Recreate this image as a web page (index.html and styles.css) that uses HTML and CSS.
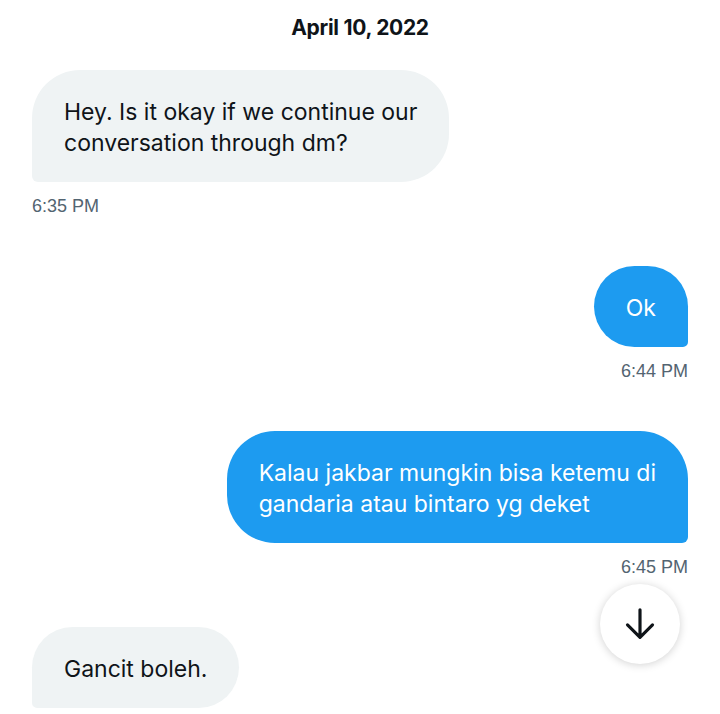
FILE: index.html
```html
<!DOCTYPE html>
<html lang="en">
<head>
    <meta charset="UTF-8">
    <meta name="viewport" content="width=device-width, initial-scale=1.0">
    <title>Messages</title>
    <link rel="stylesheet" href="styles.css">
</head>
<body>
    <div class="chat">
        <div class="date">April 10, 2022</div>

        <div class="message received">
            <div class="bubble">Hey. Is it okay if we continue our<br>conversation through dm?</div>
            <div class="time">6:35 PM</div>
        </div>

        <div class="message sent">
            <div class="bubble">Ok</div>
            <div class="time">6:44 PM</div>
        </div>

        <div class="message sent">
            <div class="bubble">Kalau jakbar mungkin bisa ketemu di<br>gandaria atau bintaro yg deket</div>
            <div class="time">6:45 PM</div>
        </div>

        <div class="message received last">
            <div class="bubble">Gancit boleh.</div>
        </div>
    </div>

    <button class="scroll-down" aria-label="Scroll to bottom">
        <svg width="40" height="40" viewBox="0 0 24 24">
            <path d="M12 3.5v16M4.5 12.5l7.5 7.5 7.5-7.5" fill="none" stroke="#0f1419" stroke-width="1.9" stroke-linecap="round" stroke-linejoin="round"/>
        </svg>
    </button>
</body>
</html>
```

FILE: styles.css
```css
body {
    margin: 0;
    background-color: #ffffff;
    font-family: Inter, "Noto Sans", sans-serif;
    color: #0f1419;
    overflow: hidden;
}
.chat {
    display: flex;
    flex-direction: column;
    padding: 14px 32px 0;
}
.date {
    text-align: center;
    font-size: 21px;
    font-weight: 700;
    line-height: 28px;
    letter-spacing: -0.3px;
    margin-bottom: 28px;
}
.message {
    display: flex;
    flex-direction: column;
    margin-bottom: 50px;
}
.message.last {
    margin-bottom: 0;
}
.message.sent {
    align-items: flex-end;
}
.message.received {
    align-items: flex-start;
}
.bubble {
    font-size: 23px;
    line-height: 31px;
    padding: 27px 32px 23px;
    border-radius: 48px;
}
.received .bubble {
    background-color: #eff3f4;
    border-bottom-left-radius: 6px;
}
.sent .bubble {
    background-color: #1d9bf0;
    color: #ffffff;
    border-bottom-right-radius: 6px;
}
.time {
    font-family: "Liberation Sans", Arial, sans-serif;
    font-size: 18px;
    line-height: 20px;
    color: #536471;
    margin-top: 14px;
}
.scroll-down {
    position: absolute;
    left: 600px;
    top: 584px;
    width: 80px;
    height: 80px;
    border: none;
    border-radius: 50%;
    background-color: #ffffff;
    box-shadow: 0 1px 8px rgba(0, 0, 0, 0.18);
    display: flex;
    align-items: center;
    justify-content: center;
    cursor: pointer;
    padding: 0;
}
```
